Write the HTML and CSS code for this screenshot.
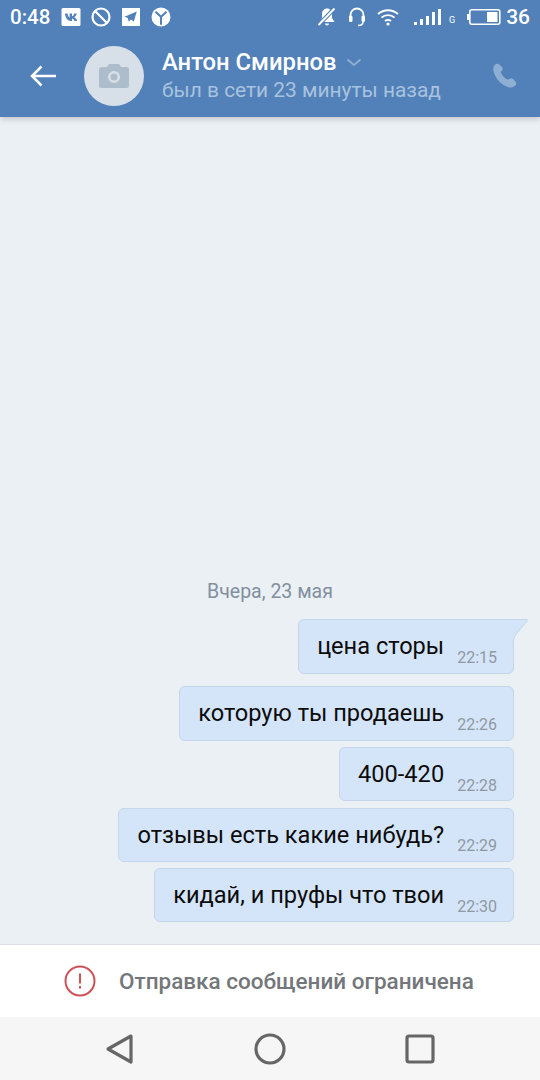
FILE: index.html
```html
<!DOCTYPE html>
<html lang="ru">
<head>
    <meta charset="UTF-8">
    <meta name="viewport" content="width=device-width, initial-scale=1.0">
    <title>Антон Смирнов</title>
    <link rel="stylesheet" href="styles.css">
</head>
<body>
    <div class="screen">
        <div class="top">
            <div class="status">
                <span class="clock">0:48</span>
                <svg class="st-icon" width="20" height="20" viewBox="0 0 20 20"><rect x="0.5" y="1" width="19" height="18" rx="1.5" fill="#fff"/><path d="M2.500 6.500h2.600c.2 2.200 1 3.600 2 3.900V6.500h2.400v2.800c1-.1 1.900-1.300 2.300-2.800h2.400c-.4 1.900-1.500 3.200-2.500 3.800 1.100.5 2.400 1.700 2.900 3.700h-2.600c-.4-1.400-1.400-2.400-2.500-2.500V14H9c-3.800 0-6.100-2.700-6.500-7.500z" fill="#5181b8" transform="translate(1.500 0)"/></svg>
                <svg class="st-icon" width="20" height="20" viewBox="0 0 20 20"><circle cx="10" cy="10" r="8.500" fill="none" stroke="#fff" stroke-width="2.200"/><path d="M4.500 4.500l11 11" stroke="#fff" stroke-width="2.200"/></svg>
                <svg class="st-icon" width="20" height="20" viewBox="0 0 20 20"><path fill-rule="evenodd" d="M1 1h18v18H1z M3.500 9.800l3.300 1.300 1 3.600 2-2.300 3 2.200L15.800 4.500z" fill="#fff"/></svg>
                <svg class="st-icon" width="20" height="20" viewBox="0 0 20 20"><circle cx="10" cy="10" r="9.500" fill="#fff"/><path d="M4.500 4.800l5.500 5 5.500-5M10 9.800v8" fill="none" stroke="#5181b8" stroke-width="2"/></svg>
                <span class="spacer"></span>
                <svg class="st-right" width="20" height="20" viewBox="0 0 20 20"><path d="M10 1.500c-3.200 0-5 2.500-5 5.500v4L2.500 15h15L15 11V7c0-3-1.800-5.500-5-5.500zM8 16.500h4a2 2 0 0 1-4 0z" fill="#fff"/><path d="M17.500 1.500L1.500 18" stroke="#5181b8" stroke-width="4"/><path d="M17.500 1.500L1.500 18" stroke="#fff" stroke-width="1.800"/></svg>
                <svg class="st-right" width="18" height="20" viewBox="0 0 18 20"><path d="M2.500 12V8a6.500 6.500 0 0 1 13 0v4" fill="none" stroke="#fff" stroke-width="1.800"/><rect x="1" y="8.500" width="3.500" height="6.500" rx="1.500" fill="#fff"/><rect x="13.500" y="8.500" width="3.500" height="6.500" rx="1.500" fill="#fff"/><path d="M15 15c0 2.500-2 3.500-5 3.500" fill="none" stroke="#fff" stroke-width="1.500"/></svg>
                <svg class="wifi" width="22" height="20" viewBox="0 0 22 20"><g fill="none" stroke="#fff" stroke-width="1.800"><path d="M1 7c5.800-5 14.200-5 20 0"/><path d="M4.500 10.500c3.800-3.200 9.200-3.200 13 0"/><path d="M8 14c1.800-1.400 4.200-1.400 6 0"/></g><circle cx="11" cy="17" r="1.600" fill="#fff"/></svg>
                <svg class="signal" width="27" height="20" viewBox="0 0 27 20"><g fill="#fff"><rect x="0" y="15" width="3" height="3"/><rect x="6" y="12" width="3" height="6"/><rect x="12" y="9" width="3" height="9"/><rect x="18" y="5" width="3" height="13"/><rect x="24" y="2" width="3" height="16"/></g></svg>
                <span class="net-g">G</span>
                <svg class="battery" width="34" height="18" viewBox="0 0 34 18"><rect x="0" y="6" width="2" height="6" fill="#fff"/><rect x="2.800" y="1.800" width="30" height="14.400" rx="2" fill="none" stroke="#fff" stroke-width="1.600"/><rect x="20" y="4" width="10.500" height="10" fill="#fff"/></svg>
                <span class="level">36</span>
            </div>
            <div class="head">
                <svg class="back" width="28" height="24" viewBox="0 0 28 24"><path d="M27 12H3M12.500 2.500L3 12l9.500 9.500" fill="none" stroke="#fff" stroke-width="2.500"/></svg>
                <div class="avatar">
                    <svg width="30" height="24" viewBox="0 0 30 24"><path fill-rule="evenodd" d="M2.500 3H8l2-3h10l2 3h5.500A2.500 2.500 0 0 1 30 5.500v16a2.500 2.500 0 0 1-2.500 2.500h-25A2.500 2.500 0 0 1 0 21.500v-16A2.500 2.500 0 0 1 2.500 3zM15 7a6 6 0 1 0 0 12 6 6 0 0 0 0-12zM15 9.500a3.500 3.500 0 1 1 0 7 3.500 3.500 0 0 1 0-7z" fill="#aebdcc"/></svg>
                </div>
                <div class="who">
                    <div class="name">Антон Смирнов <svg class="chev" width="16" height="9" viewBox="0 0 16 9"><path d="M1.500 1.500L8 7l6.500-5.500" fill="none" stroke="#8eafd4" stroke-width="2"/></svg></div>
                    <div class="seen">был в сети 23 минуты назад</div>
                </div>
                <svg class="call" width="28" height="28" viewBox="0 0 24 24"><path d="M6.600 1.800c-1-.6-2.200-.3-3 .4C2 3.700 1.500 6 2.300 8.600c1.800 6 7 11.600 12.700 13 2.400.6 4.600 0 6-1.600.8-.9.900-2.100.200-3l-2.300-2.500c-.8-.8-2-.9-2.900-.2l-1.500 1c-2.600-1.200-5.100-4-6.200-6.800l1.200-1.300c.7-.8.700-2 .1-2.800z" fill="#8eafd4"/></svg>
            </div>
        </div>

        <div class="chat">
            <div class="day">Вчера, 23 мая</div>
            <div class="bubble first"><span class="text">цена сторы</span><span class="time">22:15</span>
                <svg class="tail" width="16" height="24" viewBox="0 0 16 24"><path d="M0 .5H14.500C15.500 .5 15.800 1 15.300 1.800L5 14C2.500 17 1.500 20 1 24H0z" fill="#d4e5f9"/><path d="M0 .5H14.500C15.500 .5 15.800 1 15.300 1.800L5 14C2.500 17 1.500 20 1 24" fill="none" stroke="#c4d6ea"/></svg>
            </div>
            <div class="bubble"><span class="text">которую ты продаешь</span><span class="time">22:26</span></div>
            <div class="bubble"><span class="text">400-420</span><span class="time">22:28</span></div>
            <div class="bubble"><span class="text">отзывы есть какие нибудь?</span><span class="time">22:29</span></div>
            <div class="bubble"><span class="text">кидай, и пруфы что твои</span><span class="time">22:30</span></div>
        </div>

        <div class="blocked">
            <svg width="32" height="32" viewBox="0 0 32 32"><circle cx="16" cy="16" r="14.500" fill="none" stroke="#cc5257" stroke-width="2"/><rect x="15" y="8.500" width="2" height="10" fill="#cc5257"/><rect x="15" y="21" width="2" height="2.500" fill="#cc5257"/></svg>
            <span>Отправка сообщений ограничена</span>
        </div>

        <div class="nav">
            <svg width="30" height="32" viewBox="0 0 30 32"><path d="M26 3L3 16l23 13z" fill="none" stroke="#666" stroke-width="3.200" stroke-linejoin="round"/></svg>
            <svg width="32" height="32" viewBox="0 0 32 32"><circle cx="16" cy="16" r="14" fill="none" stroke="#666" stroke-width="3.200"/></svg>
            <svg width="30" height="30" viewBox="0 0 30 30"><rect x="2" y="2" width="26" height="26" rx="2" fill="none" stroke="#666" stroke-width="3.200"/></svg>
        </div>
    </div>
</body>
</html>
```

FILE: styles.css
```css
* {
    box-sizing: border-box;
}
body {
    margin: 0;
    font-family: Roboto, "Liberation Sans", sans-serif;
    background: #ebf0f5;
}
.screen {
    width: 540px;
    height: 1080px;
    display: flex;
    flex-direction: column;
    overflow: hidden;
}
.top {
    height: 117px;
    background: #5181b8;
    box-shadow: 0 2px 6px rgba(0, 0, 0, 0.18);
    position: relative;
    color: white;
}
.status {
    height: 34px;
    display: flex;
    align-items: center;
    padding: 0 10px;
}
.clock {
    font-size: 20.5px;
    font-weight: 500;
    margin-right: 11px;
}
.st-icon {
    margin-right: 10px;
}
.spacer {
    flex: 1;
}
.st-right {
    margin-right: 11px;
}
.wifi {
    margin-right: 15px;
}
.signal {
    margin-right: 8px;
}
.net-g {
    font-size: 9px;
    margin: 6px 12px 0 0;
}
.battery {
    margin-right: 5px;
}
.level {
    font-size: 21px;
    font-weight: 500;
}
.head {
    height: 83px;
    display: flex;
    align-items: center;
    padding: 0 21px 0 29px;
}
.back {
    margin-right: 27px;
}
.avatar {
    width: 60px;
    height: 60px;
    border-radius: 50%;
    background: #d7e0e8;
    display: flex;
    align-items: center;
    justify-content: center;
    margin-right: 18px;
}
.who {
    flex: 1;
}
.name {
    font-size: 23.8px;
    font-weight: 500;
    line-height: 26px;
}
.chev {
    margin-left: 4px;
    vertical-align: 3px;
}
.seen {
    font-size: 20.9px;
    line-height: 26px;
    margin-top: 2px;
    color: #a9c2df;
}
.chat {
    flex: 1;
    display: flex;
    flex-direction: column;
    align-items: flex-end;
    justify-content: flex-end;
    gap: 6.5px;
    padding: 0 26px 22px 0;
}
.day {
    align-self: stretch;
    text-align: center;
    font-size: 19.5px;
    color: #828f9f;
    line-height: 20px;
    padding-left: 26px;
    margin-bottom: 10.5px;
}
.bubble {
    height: 54px;
    padding: 0 16px 0 18px;
    background: #d4e5f9;
    border: 1px solid #c4d6ea;
    border-radius: 6px;
    display: flex;
    align-items: center;
    position: relative;
}
.bubble.first {
    height: 55px;
    margin-bottom: 5.5px;
    border-top-right-radius: 0;
}
.bubble.first + .bubble {
    height: 55px;
}
.text {
    font-size: 23.6px;
    color: #0c0c0c;
}
.time {
    font-size: 16px;
    color: #8f98a3;
    margin: 22px 0 0 13px;
}
.tail {
    position: absolute;
    top: -1px;
    left: 100%;
    margin-left: -1px;
}
.blocked {
    height: 73px;
    background: white;
    border-top: 1px solid #dde1e6;
    display: flex;
    align-items: center;
    padding-left: 64px;
    gap: 23px;
    font-size: 22.5px;
    font-weight: 500;
    color: #73767a;
}
.nav {
    height: 63px;
    background: #f6f6f6;
    display: flex;
    align-items: center;
    justify-content: space-between;
    padding: 0 105px;
}
```
